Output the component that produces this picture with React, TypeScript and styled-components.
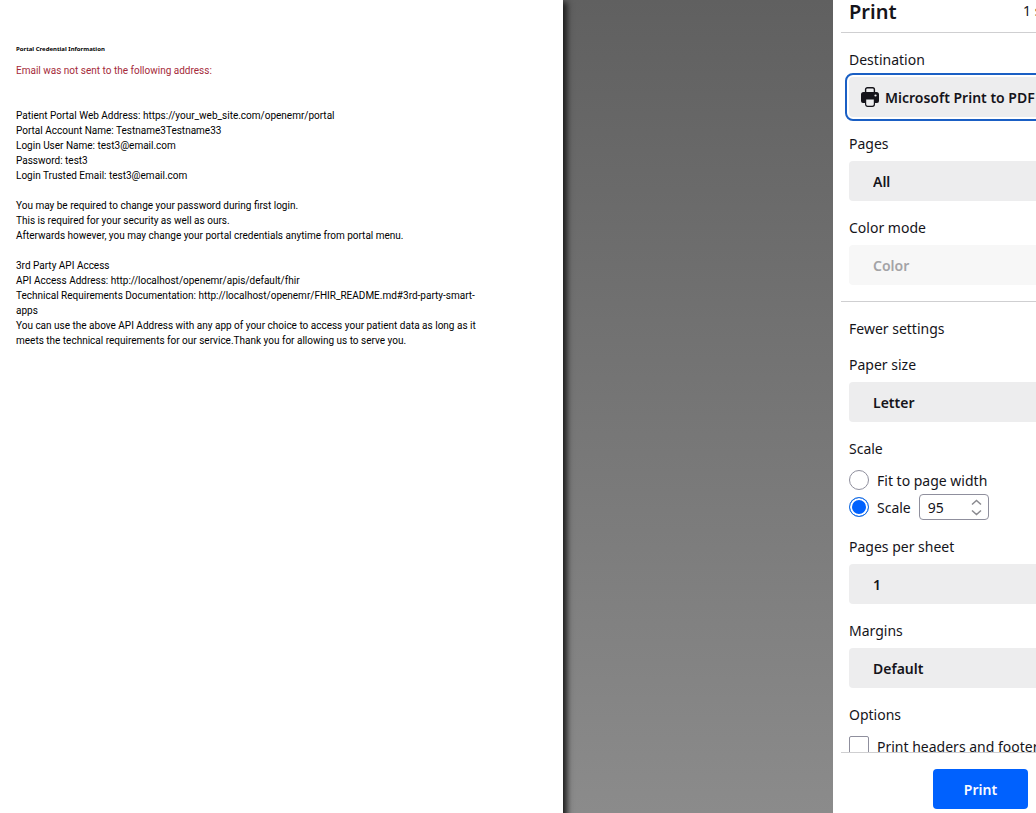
import React from "react";
import styled, { createGlobalStyle, css } from "styled-components";

const GlobalStyle = createGlobalStyle`
  *, *::before, *::after { box-sizing: border-box; }
  body {
    margin: 0;
    font-family: "Noto Sans", "Open Sans", sans-serif;
    color: #15141a;
    background: #fff;
  }
`;

const Window = styled.div`
  display: flex;
  height: 100vh;
  overflow: hidden;
`;

const Preview = styled.main`
  flex: 1;
  min-width: 0;
  display: flex;
  padding-right: 270px;
  background: linear-gradient(#606060, #8b8b8b);
`;

const Paper = styled.article`
  flex: 1;
  min-width: 0;
  padding: 44px 16px;
  background: #fff;
  color: #000;
  font-family: Roboto, "Noto Sans", sans-serif;
  font-size: 10px;
  line-height: 15px;
  box-shadow: 2px 4px 6px 2px #1c1c1c;
`;

const PaperTitle = styled.h1`
  margin: 0 0 9px;
  font-family: "Noto Sans", sans-serif;
  font-size: 6px;
  line-height: 10px;
  font-weight: 700;
`;

const Warning = styled.p`
  margin: 0 0 30px;
  color: #a52a3a;
`;

const Paragraph = styled.p`
  margin: 0 0 15px;
  white-space: nowrap;
`;

const Sidebar = styled.aside`
  flex: 0 0 203px;
  display: flex;
  flex-direction: column;
  overflow: hidden;
  background: #fff;
  font-size: 14px;
  line-height: 20px;
  white-space: nowrap;
`;

const Header = styled.header`
  display: flex;
  justify-content: space-between;
  gap: 126px;
  height: 33px;
  margin-left: 8px;
  padding-left: 8px;
  border-bottom: 1px solid #cfcfd1;
`;

const Title = styled.h2`
  flex: 0 0 48px;
  margin: 0;
  font-size: 20px;
  line-height: 24px;
  font-weight: 600;
`;

const SheetCount = styled.span`
  line-height: 22px;
`;

const Settings = styled.form`
  flex: 1;
  min-height: 0;
  overflow: hidden;
`;

const Field = styled.div`
  display: flex;
  flex-direction: column;
  gap: 7px;
  padding: 17px 0 0 16px;
`;

const GroupTitle = styled.div``;

const Control = styled.div`
  display: grid;
  align-items: center;
  & > * {
    grid-area: 1 / 1;
  }
`;

const Select = styled.select<{ $withIcon?: boolean; $focused?: boolean }>`
  appearance: none;
  width: 100%;
  height: 40px;
  padding: 2px 0 0 ${(p) => (p.$withIcon ? 36 : 24)}px;
  border: 0;
  border-radius: 4px 0 0 4px;
  background: #ededee;
  color: #15141a;
  font: inherit;
  font-weight: 600;
  outline: 0;
  ${(p) =>
    p.$focused &&
    css`
      width: calc(100% + 8px);
      outline: 2px solid #1a5fc4;
      outline-offset: 2px;
    `}
  &:disabled {
    background: #f7f7f7;
    color: #a3a3a6;
    opacity: 1;
  }
`;

const PrinterIcon = styled.svg`
  width: 18px;
  height: 20px;
  margin-left: 12px;
  z-index: 1;
  pointer-events: none;
`;

const Divider = styled.hr`
  height: 1px;
  margin: 16px 0 0 8px;
  border: 0;
  background: #cfcfd1;
`;

const TextButton = styled.button`
  display: block;
  height: 20px;
  margin: 16px 0 0 16px;
  padding: 1px 0 0;
  border: 0;
  background: none;
  color: inherit;
  font: inherit;
`;

const Options = styled.div``;

const OptionRow = styled.div<{ $height: number }>`
  display: flex;
  align-items: center;
  gap: 8px;
  height: ${(p) => p.$height}px;
  label {
    padding-top: 2px;
  }
`;

const Choice = styled.input`
  appearance: none;
  flex: none;
  width: 20px;
  height: 20px;
  margin: 0;
  border: 1px solid #8f8f9d;
  background: #fff;
  &[type="radio"] {
    border-radius: 50%;
  }
  &[type="checkbox"] {
    border-radius: 2px;
  }
  &:checked {
    border-color: #1a6fe0;
    background: #0061fe;
    box-shadow: inset 0 0 0 2px #fff;
  }
`;

const Stepper = styled.div`
  display: flex;
  align-items: center;
  justify-content: space-between;
  width: 70px;
  height: 26px;
  padding: 0 6px 0 8px;
  border: 1px solid #8f8f9d;
  border-radius: 4px;
`;

const NumberInput = styled.input`
  appearance: textfield;
  width: 36px;
  padding: 2px 0 0;
  border: 0;
  background: none;
  color: inherit;
  font: inherit;
  outline: 0;
  &::-webkit-inner-spin-button {
    appearance: none;
  }
`;

const Footer = styled.footer`
  display: flex;
  justify-content: flex-end;
  margin-left: 8px;
  padding: 16px 8px 4px;
  border-top: 1px solid #cfcfd1;
`;

const PrintButton = styled.button`
  width: 95px;
  height: 40px;
  padding: 2px 0 0;
  border: 0;
  border-radius: 4px;
  background: #0061fe;
  color: #fbfbfe;
  font: inherit;
  font-weight: 600;
`;

function Printer() {
  return (
    <PrinterIcon viewBox="0 0 18 20" aria-hidden="true">
      <path
        d="M4.600 6V2.600A1.800 1.800 0 0 1 6.400 0.800h5.200A1.800 1.800 0 0 1 13.400 2.600V6"
        fill="none"
        stroke="#15141a"
        strokeWidth="1.400"
      />
      <path
        d="M2.500 5h13A2.500 2.500 0 0 1 18 7.500v6.500a2 2 0 0 1-2 2H2a2 2 0 0 1-2-2V7.500A2.500 2.500 0 0 1 2.500 5z"
        fill="#15141a"
      />
      <path
        d="M4.600 12h8.800v5.300a2 2 0 0 1-2 2H6.600a2 2 0 0 1-2-2z"
        fill="#ededee"
        stroke="#15141a"
        strokeWidth="1.200"
      />
      <circle cx="14.500" cy="8.500" r="1.100" fill="#ededee" />
    </PrinterIcon>
  );
}

interface SelectFieldProps {
  id: string;
  label: string;
  value: string;
  disabled?: boolean;
  focused?: boolean;
  icon?: React.ReactNode;
}

function SelectField({ id, label, value, disabled, focused, icon }: SelectFieldProps) {
  return (
    <Field>
      <label htmlFor={id}>{label}</label>
      <Control>
        {icon}
        <Select id={id} disabled={disabled} $focused={focused} $withIcon={!!icon}>
          <option>{value}</option>
        </Select>
      </Control>
    </Field>
  );
}

export default function App() {
  return (
    <>
      <GlobalStyle />
      <Window>
        <Preview>
          <Paper>
            <PaperTitle>Portal Credential Information</PaperTitle>
            <Warning>Email was not sent to the following address:</Warning>
            <Paragraph>
              Patient Portal Web Address: https://your_web_site.com/openemr/portal
              <br />
              Portal Account Name: Testname3Testname33
              <br />
              Login User Name: test3@email.com
              <br />
              Password: test3
              <br />
              Login Trusted Email: test3@email.com
            </Paragraph>
            <Paragraph>
              You may be required to change your password during first login.
              <br />
              This is required for your security as well as ours.
              <br />
              Afterwards however, you may change your portal credentials anytime from portal menu.
            </Paragraph>
            <Paragraph>
              3rd Party API Access
              <br />
              API Access Address: http://localhost/openemr/apis/default/fhir
              <br />
              Technical Requirements Documentation: http://localhost/openemr/FHIR_README.md#3rd-party-smart-
              <br />
              apps
              <br />
              You can use the above API Address with any app of your choice to access your patient data as long as it
              <br />
              meets the technical requirements for our service.Thank you for allowing us to serve you.
            </Paragraph>
          </Paper>
        </Preview>
        <Sidebar>
          <Header>
            <Title>Print</Title>
            <SheetCount>1 sheet of paper</SheetCount>
          </Header>
          <Settings>
            <SelectField id="destination" label="Destination" value="Microsoft Print to PDF" focused icon={<Printer />} />
            <SelectField id="pages" label="Pages" value="All" />
            <SelectField id="color" label="Color mode" value="Color" disabled />
            <Divider />
            <TextButton type="button">Fewer settings</TextButton>
            <SelectField id="paper" label="Paper size" value="Letter" />
            <Field role="radiogroup" aria-labelledby="scale-title">
              <GroupTitle id="scale-title">Scale</GroupTitle>
              <Options>
                <OptionRow $height={28}>
                  <Choice type="radio" name="scale" id="fit" />
                  <label htmlFor="fit">Fit to page width</label>
                </OptionRow>
                <OptionRow $height={26}>
                  <Choice type="radio" name="scale" id="custom" defaultChecked />
                  <label htmlFor="custom">Scale</label>
                  <Stepper>
                    <NumberInput type="number" defaultValue={95} aria-label="Scale percentage" />
                    <svg width="11" height="17" viewBox="0 0 11 17" fill="none" stroke="#8a8a8f" strokeWidth="1.500" aria-hidden="true">
                      <path d="M1 5.500L5.500 1.500L10 5.500M1 11.500L5.500 15.500L10 11.500" />
                    </svg>
                  </Stepper>
                </OptionRow>
              </Options>
            </Field>
            <SelectField id="per-sheet" label="Pages per sheet" value="1" />
            <SelectField id="margins" label="Margins" value="Default" />
            <Field role="group" aria-labelledby="options-title">
              <GroupTitle id="options-title">Options</GroupTitle>
              <OptionRow $height={28}>
                <Choice type="checkbox" id="headers" />
                <label htmlFor="headers">Print headers and footers</label>
              </OptionRow>
            </Field>
          </Settings>
          <Footer>
            <PrintButton type="button">Print</PrintButton>
          </Footer>
        </Sidebar>
      </Window>
    </>
  );
}
